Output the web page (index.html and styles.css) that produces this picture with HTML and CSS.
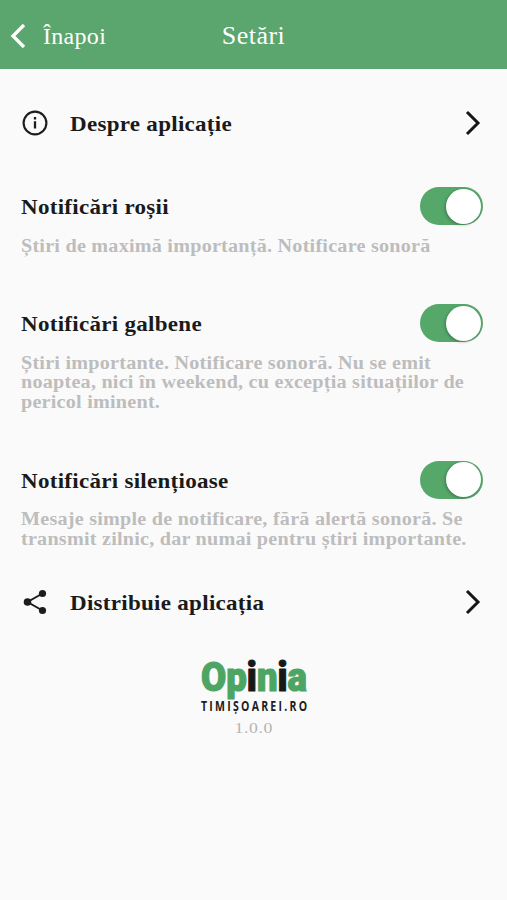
FILE: index.html
```html
<!DOCTYPE html>
<html lang="ro">
<head>
<meta charset="utf-8">
<title>Setări</title>
<link rel="stylesheet" href="styles.css">
</head>
<body>
<header class="bar">
  <a class="back">
    <svg width="16" height="26" viewBox="0 0 16 26"><path d="M16 2 5 13l11 11" fill="none" stroke="#fff" stroke-width="3.3"/></svg>
    <span>Înapoi</span>
  </a>
  <h1>Setări</h1>
</header>
<main>
  <div class="link about">
    <svg class="icon" width="26" height="26" viewBox="0 0 26 26"><circle cx="13" cy="13" r="11.4" fill="none" stroke="#1c1c1e" stroke-width="2.1"/><path d="M13 11.2v7.4M13 7v2.5" stroke="#1c1c1e" stroke-width="2.3"/></svg>
    <span class="label">Despre aplicație</span>
    <svg class="chev" width="16" height="26" viewBox="0 0 16 26"><path d="M2 2l11 11L2 24" fill="none" stroke="#161616" stroke-width="3"/></svg>
  </div>
  <section class="red">
    <div class="row"><h2 class="label">Notificări roșii</h2><span class="switch"></span></div>
    <p><span>Știri de maximă importanță. Notificare sonoră</span></p>
  </section>
  <section class="yellow">
    <div class="row"><h2 class="label">Notificări galbene</h2><span class="switch"></span></div>
    <p><span>Știri importante. Notificare sonoră. Nu se emit</span><span>noaptea, nici în weekend, cu excepția situațiilor de</span><span>pericol iminent.</span></p>
  </section>
  <section class="silent">
    <div class="row"><h2 class="label">Notificări silențioase</h2><span class="switch"></span></div>
    <p><span>Mesaje simple de notificare, fără alertă sonoră. Se</span><span>transmit zilnic, dar numai pentru știri importante.</span></p>
  </section>
  <div class="link share">
    <svg class="icon" width="26" height="26" viewBox="0 0 26 26"><path d="M20.500 4.500 5.500 13l15 8.500" fill="none" stroke="#1c1c1e" stroke-width="2"/><g fill="#1c1c1e"><circle cx="20.500" cy="4.500" r="3.600"/><circle cx="5.500" cy="13" r="3.800"/><circle cx="20.500" cy="21.500" r="3.600"/></g></svg>
    <span class="label">Distribuie aplicația</span>
    <svg class="chev" width="16" height="26" viewBox="0 0 16 26"><path d="M2 2l11 11L2 24" fill="none" stroke="#161616" stroke-width="3"/></svg>
  </div>
</main>
<footer>
  <svg class="logo" width="110" height="60" viewBox="0 0 110 60">
    <text class="brand" x="2" y="34.500" textLength="106" lengthAdjust="spacingAndGlyphs">Op<tspan class="ink">i</tspan>n<tspan class="ink">i</tspan>a</text>
    <text class="domain" transform="translate(2 55) scale(.78 1)" textLength="136">TIMIȘOAREI.RO</text>
  </svg>
  <span class="version">1.0.0</span>
</footer>
</body>
</html>
```
FILE: styles.css
```css
* { box-sizing: border-box; margin: 0; padding: 0; }
body { width: 507px; height: 900px; background: #fafafa; color: #1a1a1a; font-family: Georgia, "Liberation Serif", serif; overflow: hidden; }
svg { display: block; flex: none; overflow: visible; }
.bar { height: 69px; background: #5ba56e; color: #fff; display: grid; grid-template-columns: 1fr auto 1fr; align-items: center; padding: 2px 8px 0; }
.back { display: flex; align-items: center; gap: 19px; font-size: 24px; letter-spacing: .3px; }
.back span { padding-top: 2px; }
h1 { font-size: 26px; font-weight: 400; line-height: 30px; letter-spacing: .5px; }
main { padding: 0 21px; }
.link { display: flex; align-items: center; height: 30px; }
.about { margin-top: 39px; }
.icon { margin-left: 1px; margin-right: 22px; }
.chev { margin-left: auto; margin-right: 5px; }
.label { font-size: 21px; font-weight: 700; line-height: 26px; letter-spacing: .25px; white-space: nowrap; transform: translateY(1px) scaleX(1.097); transform-origin: 0 50%; }
.row { display: flex; justify-content: space-between; align-items: center; height: 38px; padding-right: 3px; }
.switch { width: 63px; height: 38px; border-radius: 19px; background: #55a76a; display: flex; justify-content: flex-end; padding: 1.5px 2px; }
.switch::after { content: ""; width: 35px; height: 35px; border-radius: 50%; background: #fff; box-shadow: -1px 1px 3px #0004; }
.red { margin-top: 49px; }
.yellow { margin-top: 48px; }
.silent { margin-top: 48.5px; }
.red p, .yellow p, .silent p { padding-top: 11.5px; font-size: 18px; font-weight: 700; line-height: 19.5px; color: #bdbdbd; }
p span { display: block; width: max-content; letter-spacing: .2px; white-space: nowrap; transform: scaleX(1.12); transform-origin: 0 50%; }
.share { margin-top: 38px; }
footer { display: flex; flex-direction: column; align-items: center; margin-top: 39px; }
.brand { font: 900 41px Roboto, "Liberation Sans", sans-serif; fill: #4da564; stroke: #4da564; stroke-width: 1.2px; stroke-linejoin: round; }
.brand .ink { fill: #181818; stroke: #181818; }
.domain { font: 700 13.5px "Open Sans", sans-serif; fill: #202020; }
.version { font-size: 14.5px; line-height: 24px; letter-spacing: .5px; color: #b5b5b5; transform: scaleX(1.22); }
```
